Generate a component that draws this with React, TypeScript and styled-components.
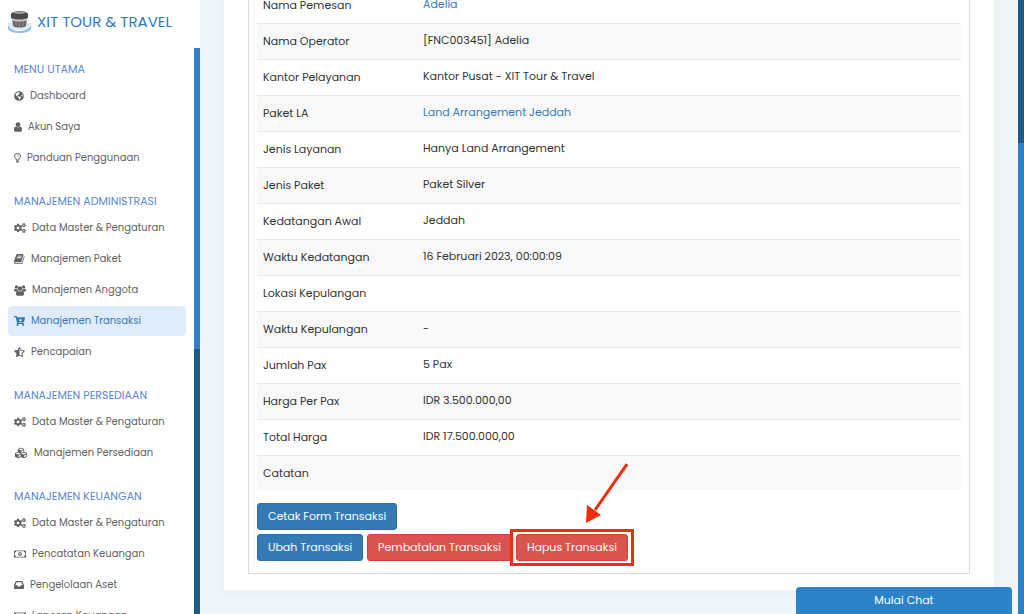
import React from "react";
import type { ComponentType, SVGProps } from "react";
import styled, { createGlobalStyle } from "styled-components";
import {
  FaCartArrowDown,
  FaCogs,
  FaCubes,
  FaGlobeAmericas,
  FaRegMoneyBillAlt,
  FaStarHalfAlt,
} from "react-icons/fa";

const GlobalStyle = createGlobalStyle`
  *, *::before, *::after { box-sizing: border-box; }
  body {
    margin: 0;
    background: #f0f5f9;
    color: #333;
    font-family: Poppins, Inter, "Liberation Sans", sans-serif;
    font-size: 11px;
    line-height: 18px;
  }
  a { color: #337ab7; text-decoration: none; }
`;

const Page = styled.div`
  display: flex;
  height: 100vh;
  overflow: hidden;
`;

const Sidebar = styled.aside`
  flex: 0 0 200px;
  display: flex;
  flex-direction: column;
  background: #fff;
`;

const Brand = styled.a`
  flex: 0 0 48px;
  display: flex;
  align-items: center;
  gap: 6px;
  padding: 0 8px 4px;
  font-size: 15px;
  line-height: 24px;
  white-space: nowrap;
`;

const MenuArea = styled.div`
  flex: 1;
  min-height: 0;
  display: flex;
`;

const Menu = styled.nav`
  flex: 1;
  min-width: 0;
  overflow: hidden;
  padding: 10px 8px 0;
`;

const Group = styled.section`
  margin-bottom: 17px;
`;

const GroupTitle = styled.h2`
  margin: 0 0 1px;
  padding: 0 6px;
  color: #5b87d0;
  font-size: 11px;
  font-weight: 400;
  line-height: 22px;
  white-space: nowrap;
`;

const List = styled.ul`
  display: grid;
  gap: 1px;
  margin: 0;
  padding: 0;
  list-style: none;
`;

const MenuLink = styled.a<{ $active?: boolean }>`
  display: flex;
  align-items: center;
  gap: 6px;
  height: 30px;
  padding: 0 6px;
  border-radius: 4px;
  background: ${(p) => (p.$active ? "#e1ecfa" : "transparent")};
  color: ${(p) => (p.$active ? "#337ab7" : "#626262")};
  font-size: 10px;
  white-space: nowrap;
`;

const IconBox = styled.span<{ $w: number; $h: number }>`
  flex: none;
  display: flex;
  width: ${(p) => p.$w}px;
  height: ${(p) => p.$h}px;
  svg { width: 100%; height: 100%; }
`;

const Track = styled.div`
  flex: 0 0 6px;
  display: flex;
  flex-direction: column;
  background: #1d5a85;
`;

const Gap = styled.div<{ $share: number }>`
  flex: ${(p) => p.$share} 0 0;
`;

const Thumb = styled.div<{ $share: number }>`
  flex: ${(p) => p.$share} 0 0;
  background: #2b82c9;
`;

const Main = styled.main`
  flex: 1;
  min-width: 0;
  display: flex;
  flex-direction: column;
  justify-content: flex-end;
  padding: 0 24px 24px;
`;

const Card = styled.section`
  padding: 16px 24px;
  background: #fff;
  box-shadow: 0 0 8px rgba(60, 70, 100, 0.06);
`;

const Panel = styled.div`
  padding: 7px 8px 12px;
  border: 1px solid #ddd;
`;

const DataTable = styled.table`
  width: 100%;
  table-layout: fixed;
  border-collapse: collapse;
  tr:nth-child(even) { background: #f9f9f9; }
`;

const cell = `
  height: 36px;
  border-top: 1px solid #e9e9e9;
  text-align: left;
  font-weight: 400;
  vertical-align: middle;
`;

const Label = styled.th`
  ${cell}
  width: 160px;
  padding: 0 6px;
`;

const Value = styled.td`
  ${cell}
  padding: 0 6px 2px;
`;

const Actions = styled.div`
  display: flex;
  gap: 4px;
  margin-top: 4px;
  &:first-of-type { margin-top: 12px; }
`;

const Button = styled.button<{ $tone: "primary" | "danger" }>`
  height: 27px;
  padding: 0 10px 1px;
  border: 1px solid ${(p) => (p.$tone === "primary" ? "#2e6da4" : "#d43f3a")};
  border-radius: 3px;
  background: ${(p) => (p.$tone === "primary" ? "#337ab7" : "#d9534f")};
  color: #fff;
  font: inherit;
  white-space: nowrap;
`;

const Highlight = styled.div`
  position: relative;
  &::after {
    content: "";
    position: absolute;
    inset: -5px -6px;
    border: 3px solid #f12d0c;
    pointer-events: none;
  }
`;

const Pointer = styled.svg`
  position: absolute;
  right: 0;
  bottom: calc(100% + 10px);
`;

const ChatButton = styled.button`
  position: fixed;
  right: 12px;
  bottom: 0;
  width: 216px;
  height: 27px;
  padding: 0 10px 1px;
  border: 0;
  border-radius: 4px 4px 0 0;
  background: #2b82c9;
  color: #fff;
  font: inherit;
`;

type Glyph = ComponentType<SVGProps<SVGSVGElement>>;

const UserIcon: Glyph = (props) => (
  <svg viewBox="256 128 1280 1536" fill="currentColor" {...props}>
    <path d="M1536 1399q0 109-62.500 187t-150.500 78h-854q-88 0-150.500-78t-62.500-187q0-85 8.500-160.500t31.500-152 58.500-131 94-89 134.500-34.500q131 128 313 128t313-128q76 0 134.500 34.500t94 89 58.500 131 31.500 152 8.500 160.500zm-256-887q0 159-112.500 271.500t-271.500 112.500-271.500-112.500-112.500-271.500 112.500-271.500 271.500-112.500 271.500 112.500 112.500 271.500z" />
  </svg>
);

const BookIcon: Glyph = (props) => (
  <svg viewBox="56 128 1680 1536" fill="currentColor" {...props}>
    <path d="M1639 478q40 57 18 129l-275 906q-19 64-76.500 107.500t-122.500 43.500h-923q-77 0-148.500-53.500t-99.500-131.500q-24-67-2-127 0-4 3-27t4-37q1-8-3-21.500t-3-19.500q2-11 8-21t16.500-23.500 16.500-23.500q23-38 45-91.500t30-91.500q3-10 .5-30t-.5-28q3-11 17-28t17-23q21-36 42-92t25-90q1-9-2.500-32t.5-28q4-13 22-30.500t22-22.500q19-26 42.500-84.500t27.500-96.500q1-8-3-25.500t-2-26.500q2-8 9-18t18-23 17-21q8-12 16.500-30.500t15-35 16-36 19.500-32 26.500-23.500 36-11.500 47.500 5.500l-1 3q38-9 51-9h761q74 0 114 56t18 130l-274 906q-36 119-71.500 153.500t-128.500 34.500h-869q-27 0-38 15-11 16-1 43 24 70 144 70h923q29 0 56-15.500t35-41.500l300-987q7-22 5-57 38 15 59 43zm-1064 2q-4 13 2 22.500t20 9.500h608q13 0 25.500-9.500t16.500-22.500l21-64q4-13-2-22.500t-20-9.500h-608q-13 0-25.500 9.500t-16.500 22.500zm-83 256q-4 13 2 22.500t20 9.500h608q13 0 25.500-9.500t16.500-22.500l21-64q4-13-2-22.500t-20-9.500h-608q-13 0-25.500 9.500t-16.500 22.500z" />
  </svg>
);

const BulbIcon: Glyph = (props) => (
  <svg viewBox="0 0 14 20" fill="none" stroke="currentColor" strokeWidth="2" strokeLinecap="round" {...props}>
    <path d="M4.500 13C4.500 10.500 1 9.500 1 6a6 5.200 0 0 1 12 0c0 3.500-3.500 4.500-3.500 7" />
    <path d="M7 3.800c1.600 0 2.600.8 2.800 2" strokeWidth="1.200" />
    <path d="M4.600 14h4.800M4.600 16.300h4.800M6 18.600h2" />
  </svg>
);

const UsersIcon: Glyph = (props) => (
  <svg viewBox="0 0 24 21" fill="currentColor" {...props}>
    <circle cx="4.800" cy="3.400" r="3.200" />
    <circle cx="19.200" cy="3.400" r="3.200" />
    <circle cx="12" cy="6.600" r="4.600" />
    <path d="M2 7c1.800 1 3.800 1 5 .4.200 1.800.8 2.800 1.600 3.800-1.600 0-2.600.4-3.400 1.400H2.600C.8 12.600 0 12 0 10.400 0 8.800.6 7 2 7zM22 7c-1.800 1-3.800 1-5 .4-.2 1.800-.8 2.800-1.600 3.800 1.600 0 2.600.4 3.400 1.400h2.600c1.800 0 2.600-.6 2.600-2.200C24 8.800 23.400 7 22 7z" />
    <path d="M8 11.200c2.400 2 5.600 2 8 0 3 0 4.200 3 4.200 6.400 0 2.200-1.400 3.400-3.400 3.400H7.200c-2 0-3.400-1.200-3.400-3.400 0-3.400 1.200-6.400 4.200-6.400z" />
  </svg>
);

const InboxIcon: Glyph = (props) => (
  <svg viewBox="0 0 20 16" fill="currentColor" {...props}>
    <path
      fillRule="evenodd"
      d="M4.400 0h11.200c.7 0 1.200.4 1.500 1L19.700 8c.2.500.3.900.3 1.400V15c0 .6-.4 1-1 1H1c-.6 0-1-.4-1-1V9.400c0-.5.100-.9.300-1.400L2.900 1c.3-.6.800-1 1.500-1zm.8 2.400L2.800 8.600h3.800l1.200 2.600h4.400l1.200-2.600h3.800l-2.400-6.200z"
    />
  </svg>
);

type Item = { text: string; icon: Glyph; w: number; h: number; active?: boolean };

const groups: { title: string; items: Item[] }[] = [
  {
    title: "MENU UTAMA",
    items: [
      { text: "Dashboard", icon: FaGlobeAmericas, w: 10, h: 10 },
      { text: "Akun Saya", icon: UserIcon, w: 8, h: 10 },
      { text: "Panduan Penggunaan", icon: BulbIcon, w: 7, h: 10 },
    ],
  },
  {
    title: "MANAJEMEN ADMINISTRASI",
    items: [
      { text: "Data Master & Pengaturan", icon: FaCogs, w: 12, h: 10 },
      { text: "Manajemen Paket", icon: BookIcon, w: 11, h: 10 },
      { text: "Manajemen Anggota", icon: UsersIcon, w: 12, h: 11 },
      { text: "Manajemen Transaksi", icon: FaCartArrowDown, w: 11, h: 10, active: true },
      { text: "Pencapaian", icon: FaStarHalfAlt, w: 11, h: 10 },
    ],
  },
  {
    title: "MANAJEMEN PERSEDIAAN",
    items: [
      { text: "Data Master & Pengaturan", icon: FaCogs, w: 12, h: 10 },
      { text: "Manajemen Persediaan", icon: FaCubes, w: 14, h: 12 },
    ],
  },
  {
    title: "MANAJEMEN KEUANGAN",
    items: [
      { text: "Data Master & Pengaturan", icon: FaCogs, w: 12, h: 10 },
      { text: "Pencatatan Keuangan", icon: FaRegMoneyBillAlt, w: 12, h: 10 },
      { text: "Pengelolaan Aset", icon: InboxIcon, w: 10, h: 8 },
      { text: "Laporan Keuangan", icon: FaRegMoneyBillAlt, w: 12, h: 10 },
    ],
  },
];

const rows: { label: string; value: string; link?: boolean }[] = [
  { label: "Nama Pemesan", value: "Adelia", link: true },
  { label: "Nama Operator", value: "[FNC003451] Adelia" },
  { label: "Kantor Pelayanan", value: "Kantor Pusat - XIT Tour & Travel" },
  { label: "Paket LA", value: "Land Arrangement Jeddah", link: true },
  { label: "Jenis Layanan", value: "Hanya Land Arrangement" },
  { label: "Jenis Paket", value: "Paket Silver" },
  { label: "Kedatangan Awal", value: "Jeddah" },
  { label: "Waktu Kedatangan", value: "16 Februari 2023, 00:00:09" },
  { label: "Lokasi Kepulangan", value: "" },
  { label: "Waktu Kepulangan", value: "-" },
  { label: "Jumlah Pax", value: "5 Pax" },
  { label: "Harga Per Pax", value: "IDR 3.500.000,00" },
  { label: "Total Harga", value: "IDR 17.500.000,00" },
  { label: "Catatan", value: "" },
];

const Logo = () => (
  <svg width="23" height="24" viewBox="0 0 23 24" aria-hidden="true">
    <path d="M0 15v4c2 3 6 4 11.500 4S21 22 23 19v-4c-2 4-6 6-11.500 6S2 19 0 15z" fill="#8dbdec" />
    <path d="M0 15c2 4 6 5 11.500 5S21 19 23 15v-2H0z" fill="#dcebf9" />
    <path d="M4 8l1 8c2 2 11 2 13 0l1-8z" fill="#68686a" />
    <path d="M3 4c2-4 15-4 17 0v4c-3 3-14 3-17 0z" fill="#4a494b" />
    <path d="M5 3c2-2 11-2 13 0-3 1-10 1-13 0z" fill="#a8a8a8" />
    <path d="M4 8c3 2 12 2 15 0v2c-3 2-12 2-15 0z" fill="#c8c8c8" />
    <path d="M8 11v5M11.500 12v5M15 11v5" stroke="#8f8f8f" strokeWidth="1" />
  </svg>
);

export default function App() {
  return (
    <>
      <GlobalStyle />
      <Page>
        <Sidebar>
          <Brand href="#">
            <Logo />
            XIT TOUR &amp; TRAVEL
          </Brand>
          <MenuArea>
            <Menu>
              {groups.map((group) => (
                <Group key={group.title}>
                  <GroupTitle>{group.title}</GroupTitle>
                  <List>
                    {group.items.map(({ text, icon: Icon, w, h, active }) => (
                      <li key={text}>
                        <MenuLink href="#" $active={active}>
                          <IconBox $w={w} $h={h}>
                            <Icon aria-hidden="true" />
                          </IconBox>
                          {text}
                        </MenuLink>
                      </li>
                    ))}
                  </List>
                </Group>
              ))}
            </Menu>
            <Track>
              <Thumb $share={301} />
              <Gap $share={265} />
            </Track>
          </MenuArea>
        </Sidebar>
        <Main>
          <Card>
            <Panel>
              <DataTable>
                <tbody>
                  {rows.map((row) => (
                    <tr key={row.label}>
                      <Label scope="row">{row.label}</Label>
                      <Value>{row.link ? <a href="#">{row.value}</a> : row.value}</Value>
                    </tr>
                  ))}
                </tbody>
              </DataTable>
              <Actions>
                <Button $tone="primary">Cetak Form Transaksi</Button>
              </Actions>
              <Actions>
                <Button $tone="primary">Ubah Transaksi</Button>
                <Button $tone="danger">Pembatalan Transaksi</Button>
                <Highlight>
                  <Button $tone="danger">Hapus Transaksi</Button>
                  <Pointer width="44" height="62" viewBox="0 0 44 62" aria-hidden="true">
                    <path d="M43 2L11 48" stroke="#f12d0c" strokeWidth="3" fill="none" />
                    <path d="M2 61L3 43L17 53z" fill="#f12d0c" />
                  </Pointer>
                </Highlight>
              </Actions>
            </Panel>
          </Card>
        </Main>
        <Track>
          <Gap $share={143} />
          <Thumb $share={471} />
        </Track>
      </Page>
      <ChatButton>Mulai Chat</ChatButton>
    </>
  );
}
